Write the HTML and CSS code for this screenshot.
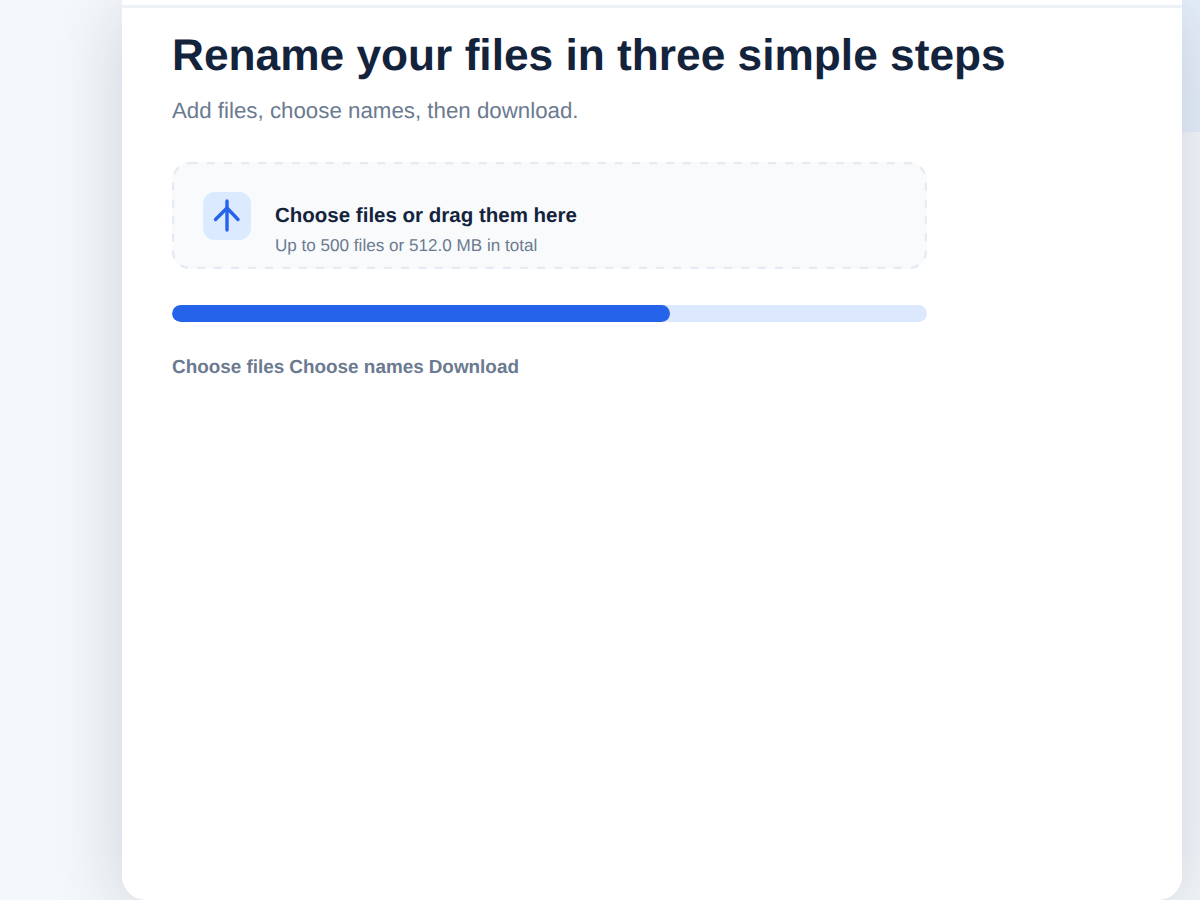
FILE: index.html
```html
<!DOCTYPE html>
<html lang="en">
<head>
  <meta charset="UTF-8" />
  <title>Rename your files</title>
  <link rel="stylesheet" href="styles.css">
</head>
<body>
  <div class="side-block"></div>
  <main class="card">
    <div class="top-rule"></div>
    <h1>Rename your files in three simple steps</h1>
    <p class="lead">Add files, choose names, then download.</p>

    <div class="dropzone">
      <svg class="drop-border" width="755" height="107" viewBox="0 0 755 107" fill="none">
        <rect x="1" y="1" width="753" height="105" rx="17" stroke="#e5ebf3" stroke-width="2.4" stroke-dasharray="8 9" />
      </svg>
      <div class="drop-icon">
        <svg width="48" height="48" viewBox="0 0 48 48" fill="none" stroke="#2563eb" stroke-width="3.4" stroke-linecap="round" stroke-linejoin="round">
          <path d="M24 9V38" />
          <path d="M12.5 27.5L24 16L35 27.5" />
        </svg>
      </div>
      <div class="drop-text">
        <div class="drop-title">Choose files or drag them here</div>
        <div class="drop-sub">Up to 500 files or 512.0 MB in total</div>
      </div>
    </div>

    <div class="progress">
      <div class="progress-fill"></div>
    </div>

    <div class="steps">
      <span>Choose files</span>
      <span>Choose names</span>
      <span>Download</span>
    </div>
  </main>
</body>
</html>
```

FILE: styles.css
```css
html, body {
  height: 100%;
}

body {
  margin: 0;
  height: 900px;
  overflow: hidden;
  position: relative;
  font-family: "Liberation Sans", Arial, sans-serif;
  text-rendering: geometricPrecision;
  background: #f4f8fc;
}

/* blue panel peeking out behind the card */
.side-block {
  position: absolute;
  top: 0;
  right: 0;
  width: 40px;
  height: 132px;
  background: #e6effb;
}

.card {
  position: relative;
  box-sizing: border-box;
  width: 1060px;
  height: 900px;
  margin-left: 122px;
  padding: 0 50px;
  background: #fff;
  border-radius: 0 0 24px 24px;
  box-shadow: 0 10px 70px rgba(15, 23, 42, 0.17);
}

.top-rule {
  height: 1px;
  margin: 0 -50px;
  padding-top: 4px;
  border-bottom: 3px solid #eef2f8;
}

h1 {
  margin: 21px 0 0;
  font-size: 44.25px;
  line-height: 54px;
  font-weight: 700;
  color: #14233c;
}

.lead {
  margin: 15px 0 0;
  font-size: 22.3px;
  line-height: 26px;
  color: #6b7a90;
}

.dropzone {
  position: relative;
  display: flex;
  align-items: flex-start;
  gap: 24px;
  box-sizing: border-box;
  width: 755px;
  height: 107px;
  margin-top: 38px;
  padding: 30px 31px 0;
  background: #f8fafc;
  border-radius: 18px;
}

.drop-border {
  position: absolute;
  top: 0;
  left: 0;
}

.drop-icon {
  flex-shrink: 0;
  width: 48px;
  height: 48px;
  background: #dbeafe;
  border-radius: 12px;
}

.drop-icon svg {
  display: block;
}

.drop-text {
  margin-top: 12px;
}

.drop-title {
  font-size: 20.5px;
  line-height: 24px;
  font-weight: 700;
  color: #14233c;
}

.drop-sub {
  margin-top: 8px;
  font-size: 17.1px;
  line-height: 20px;
  color: #6b7a90;
}

.progress {
  width: 755px;
  height: 17px;
  margin-top: 36px;
  background: #dbe8fd;
  border-radius: 9px;
  overflow: hidden;
}

.progress-fill {
  width: 66%;
  height: 100%;
  background: #2563eb;
  border-radius: 9px;
}

.steps {
  display: flex;
  gap: 5px;
  margin-top: 35px;
  font-size: 18.9px;
  line-height: 22px;
  font-weight: 700;
  color: #6b7a90;
}
```
